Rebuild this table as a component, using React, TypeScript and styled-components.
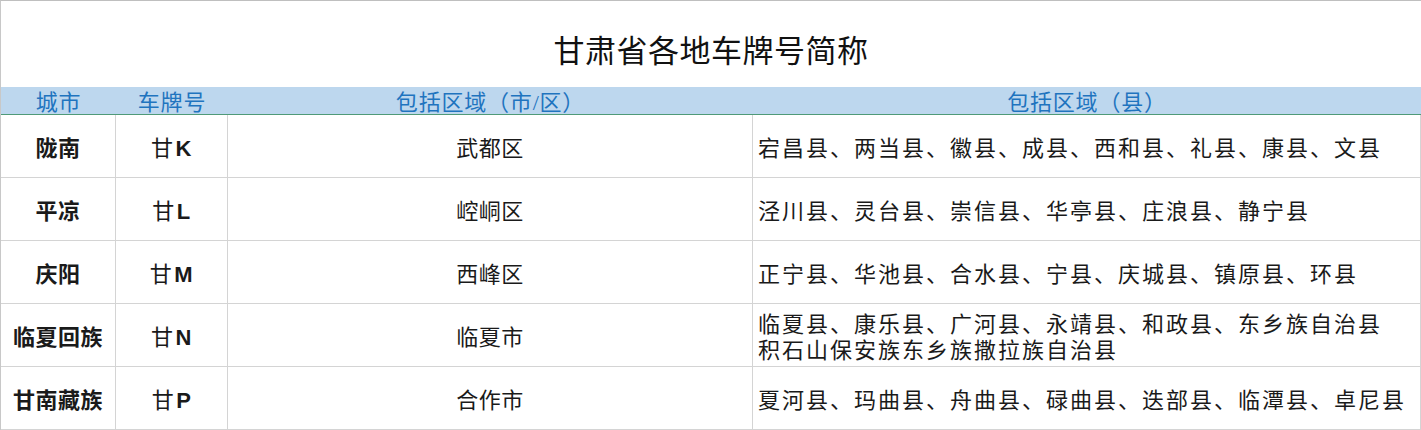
import React from 'react';
import styled, { createGlobalStyle } from 'styled-components';

const GlobalStyle = createGlobalStyle`
  body {
    margin: 0;
    background: #fff;
    font-family: "Liberation Serif", "Noto Sans CJK SC", serif;
  }
`;

const Sheet = styled.div`
  width: 1421px;
  height: 430px;
  box-sizing: border-box;
  border-top: 1px solid #bfbfbf;
  border-left: 1px solid #c8c8c8;
  overflow: hidden;
`;

const Title = styled.div`
  height: 86px;
  display: flex;
  align-items: center;
  justify-content: center;
  padding-top: 8px;
  box-sizing: border-box;
  font-size: 31px;
  color: #111;
  letter-spacing: 0.5px;
`;

const Grid = styled.div`
  display: grid;
  grid-template-columns: 115px 112px 525px 1fr;
`;

const Head = styled.div`
  height: 28px;
  box-sizing: border-box;
  background: #bdd7ee;
  border-bottom: 1px solid #4f9a78;
  display: flex;
  align-items: center;
  justify-content: center;
  padding-top: 5px;
  color: #1f74bf;
  font-size: 22px;
  line-height: 24px;
  letter-spacing: 0.8px;
`;

const Cell = styled.div<{ $align?: 'left' | 'center'; $bold?: boolean }>`
  height: 63px;
  box-sizing: border-box;
  border-right: 1px solid #d4d4d4;
  border-bottom: 1px solid #d4d4d4;
  display: flex;
  flex-direction: column;
  justify-content: center;
  align-items: ${(p) => (p.$align === 'left' ? 'flex-start' : 'center')};
  padding: ${(p) => (p.$align === 'left' ? '5px 0 0 5px' : '5px 0 0')};
  font-size: 22px;
  line-height: 26px;
  color: #1a1a1a;
  font-weight: ${(p) => (p.$bold ? 600 : 400)};
  white-space: nowrap;
  letter-spacing: ${(p) => (p.$align === 'left' ? '2px' : '0.5px')};
`;

const Letter = styled.span`
  font-family: "Liberation Sans", Arial, sans-serif;
  font-weight: 700;
  font-size: 22px;
  margin-left: 2px;
`;

type Row = { city: string; plate: string; district: string; counties: string[] };

const rows: Row[] = [
  { city: '陇南', plate: 'K', district: '武都区', counties: ['宕昌县、两当县、徽县、成县、西和县、礼县、康县、文县'] },
  { city: '平凉', plate: 'L', district: '崆峒区', counties: ['泾川县、灵台县、崇信县、华亭县、庄浪县、静宁县'] },
  { city: '庆阳', plate: 'M', district: '西峰区', counties: ['正宁县、华池县、合水县、宁县、庆城县、镇原县、环县'] },
  {
    city: '临夏回族',
    plate: 'N',
    district: '临夏市',
    counties: ['临夏县、康乐县、广河县、永靖县、和政县、东乡族自治县', '积石山保安族东乡族撒拉族自治县'],
  },
  { city: '甘南藏族', plate: 'P', district: '合作市', counties: ['夏河县、玛曲县、舟曲县、碌曲县、迭部县、临潭县、卓尼县'] },
];

export default function App() {
  return (
    <>
      <GlobalStyle />
      <Sheet>
        <Title>甘肃省各地车牌号简称</Title>
        <Grid>
          <Head>城市</Head>
          <Head>车牌号</Head>
          <Head>包括区域（市/区）</Head>
          <Head>包括区域（县）</Head>
          {rows.map((r) => (
            <React.Fragment key={r.plate}>
              <Cell $bold>{r.city}</Cell>
              <Cell>
                <div>
                  甘<Letter>{r.plate}</Letter>
                </div>
              </Cell>
              <Cell>{r.district}</Cell>
              <Cell $align="left">
                {r.counties.map((c) => (
                  <div key={c}>{c}</div>
                ))}
              </Cell>
            </React.Fragment>
          ))}
        </Grid>
      </Sheet>
    </>
  );
}
